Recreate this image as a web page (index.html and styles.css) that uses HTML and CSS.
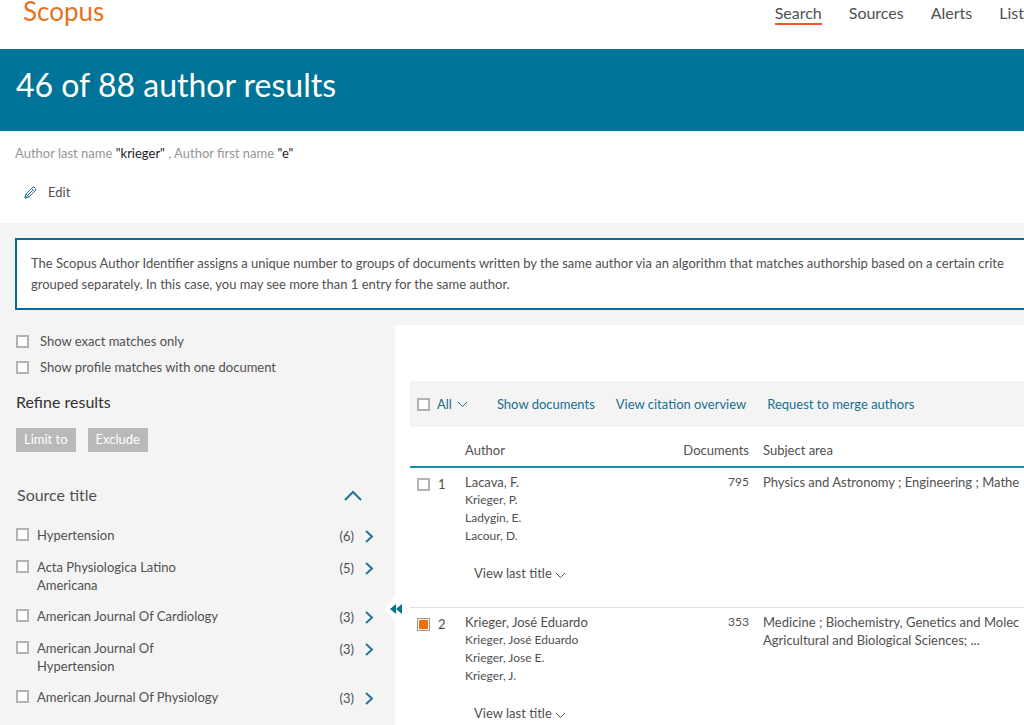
FILE: index.html
```html
<!DOCTYPE html>
<html lang="en">
<head>
<meta charset="utf-8">
<title>Scopus - Author results</title>
<link rel="stylesheet" href="styles.css">
</head>
<body>
<header class="topbar">
  <a class="brand" href="#">Scopus</a>
  <nav class="nav">
    <a class="nav-link active" href="#">Search</a>
    <a class="nav-link" href="#">Sources</a>
    <a class="nav-link" href="#">Alerts</a>
    <a class="nav-link" href="#">List</a>
  </nav>
</header>

<div class="banner"><h1>46 of 88 author results</h1></div>

<section class="query">
  <p class="terms">Author last name <strong>"krieger"</strong> , Author first name <strong>"e"</strong></p>
  <a class="edit" href="#">
    <svg width="13" height="13" viewBox="0 0 13 13" fill="none" stroke="#2a7199" stroke-width="1"><path d="M1 12l1-4 6-6q1-1.500 2.500-.5l1 1q1 1.500-.5 2.500L5 11z"/><path d="M7.500 2.500l3 3M2 8l3 3M3.500 9.500l5-5"/><path d="M1 12l.5-2 1.500 1.500z" fill="#2a7199"/></svg>
    Edit
  </a>
</section>

<main class="content">
  <div class="notice">
    <p>The Scopus Author Identifier assigns a unique number to groups of documents written by the same author via an algorithm that matches authorship based on a certain crite</p>
    <p>grouped separately. In this case, you may see more than 1 entry for the same author.</p>
  </div>

  <div class="columns">
    <aside class="sidebar">
      <label class="option"><input class="box" type="checkbox">Show exact matches only</label>
      <label class="option"><input class="box" type="checkbox">Show profile matches with one document</label>
      <h2>Refine results</h2>
      <div class="actions">
        <button class="btn" type="button">Limit to</button>
        <button class="btn" type="button">Exclude</button>
      </div>
      <div class="facet-head">
        <h3>Source title</h3>
        <button class="icon-btn" type="button" aria-label="Collapse source title"><svg width="18" height="11" viewBox="0 0 18 11" fill="none" stroke="#1f7197" stroke-width="2"><path d="M1 10l8-8 8 8"/></svg></button>
      </div>
      <ul class="facets">
        <li><label class="facet"><input class="box" type="checkbox"><span>Hypertension</span></label><a class="count" href="#">(6)<svg class="chev" width="8" height="13" viewBox="0 0 8 13"><path d="M1 1l6 5.500-6 5.500"/></svg></a></li>
        <li><label class="facet"><input class="box" type="checkbox"><span>Acta Physiologica Latino<br>Americana</span></label><a class="count" href="#">(5)<svg class="chev" width="8" height="13" viewBox="0 0 8 13"><path d="M1 1l6 5.500-6 5.500"/></svg></a></li>
        <li><label class="facet"><input class="box" type="checkbox"><span>American Journal Of Cardiology</span></label><a class="count" href="#">(3)<svg class="chev" width="8" height="13" viewBox="0 0 8 13"><path d="M1 1l6 5.500-6 5.500"/></svg></a></li>
        <li><label class="facet"><input class="box" type="checkbox"><span>American Journal Of<br>Hypertension</span></label><a class="count" href="#">(3)<svg class="chev" width="8" height="13" viewBox="0 0 8 13"><path d="M1 1l6 5.500-6 5.500"/></svg></a></li>
        <li><label class="facet"><input class="box" type="checkbox"><span>American Journal Of Physiology</span></label><a class="count" href="#">(3)<svg class="chev" width="8" height="13" viewBox="0 0 8 13"><path d="M1 1l6 5.500-6 5.500"/></svg></a></li>
      </ul>
    </aside>

    <section class="results">
      <button class="handle" type="button" aria-label="Hide filters"><svg width="24" height="36" viewBox="0 0 24 36"><path d="M12 3Q11 9 4 14q-4 4 0 8 7 5 8 11z" fill="#fff"/><path d="M13 13v10l-6-5zM19 13v10l-6-5z" fill="#0b7390"/></svg></button>
      <div class="toolbar">
        <label class="all"><input class="box" type="checkbox">All <svg class="down" width="11" height="7" viewBox="0 0 11 7"><path d="M1 1l4.500 4.500L10 1"/></svg></label>
        <a href="#">Show documents</a>
        <a href="#">View citation overview</a>
        <a href="#">Request to merge authors</a>
      </div>
      <table class="table">
        <thead>
          <tr><th class="c-pick"></th><th class="c-author">Author</th><th class="c-docs">Documents</th><th class="c-subject">Subject area</th></tr>
        </thead>
        <tbody>
          <tr>
            <td><label class="pick"><input class="box" type="checkbox">1</label></td>
            <td><a class="name" href="#">Lacava, F.</a><ul class="variants"><li>Krieger, P.</li><li>Ladygin, E.</li><li>Lacour, D.</li></ul>
              <button class="last" type="button">View last title <svg class="down" width="11" height="7" viewBox="0 0 11 7"><path d="M1 1l4.500 4.500L10 1"/></svg></button></td>
            <td class="num">795</td>
            <td class="subject">Physics and Astronomy ; Engineering ; Mathe</td>
          </tr>
          <tr>
            <td><label class="pick"><input class="box" type="checkbox" checked>2</label></td>
            <td><a class="name" href="#">Krieger, José Eduardo</a><ul class="variants"><li>Krieger, José Eduardo</li><li>Krieger, Jose E.</li><li>Krieger, J.</li></ul>
              <button class="last" type="button">View last title <svg class="down" width="11" height="7" viewBox="0 0 11 7"><path d="M1 1l4.500 4.500L10 1"/></svg></button></td>
            <td class="num">353</td>
            <td class="subject">Medicine ; Biochemistry, Genetics and Molec<br>Agricultural and Biological Sciences; ...</td>
          </tr>
        </tbody>
      </table>
    </section>
  </div>
</main>
</body>
</html>
```
FILE: styles.css
```css
* { box-sizing: border-box; }
html { overflow: hidden; }
body {
  margin: 0;
  overflow: hidden;
  background: #fff;
  color: #505050;
  font: 13px/18px Lato, "Noto Sans", sans-serif;
}
h1, h2, h3, p, ul { margin: 0; padding: 0; font-weight: 400; }
ul { list-style: none; }
a { color: inherit; text-decoration: none; }
button { font: inherit; color: inherit; border: 0; padding: 0; background: none; }

.topbar {
  display: flex;
  justify-content: space-between;
  height: 49px;
  padding-left: 23px;
  white-space: nowrap;
}
.brand { color: #e9711c; font-size: 26px; line-height: 23px; }
.nav { display: flex; align-items: flex-start; gap: 27px; font-size: 16px; line-height: 25px; }
.nav-link { height: 25px; }
.nav-link.active { border-bottom: 2px solid #ec5b24; }

.banner { padding: 14px 16px 25px; background: #007398; color: #fff; }
.banner h1 { font-size: 32px; line-height: 43px; }

.query { padding: 13px 15px 22px; }
.terms { color: #969696; }
.terms strong { color: #222; font-weight: 400; }
.edit { display: flex; align-items: center; gap: 11px; margin: 21px 0 0 9px; }

.content { padding: 15px 0 0; background: #f4f4f4; }
.notice {
  margin-left: 15px;
  padding: 13px 14px;
  border: 2px solid #046c96;
  border-right: 0;
  background: #fff;
  line-height: 21px;
  white-space: nowrap;
  overflow: hidden;
}
.columns { display: grid; grid-template-columns: 395px minmax(0, 1fr); margin-top: 15px; }

.box {
  appearance: none;
  flex: none;
  width: 13px;
  height: 13px;
  margin: 0;
  border: 2px solid #b3b3b3;
  background: #fff;
}
.box:checked { border: 1px solid #a59585; padding: 1px; background: #ed700d content-box; box-shadow: inset 0 0 0 1px #fff; }

.sidebar { padding: 7px 22px 20px 16px; }
.option { display: flex; align-items: center; gap: 11px; margin-bottom: 8px; }
.sidebar h2 { margin-top: 15px; color: #323232; font-size: 16px; line-height: 22px; }
.actions { display: flex; gap: 12px; margin-top: 15px; }
.btn { height: 24px; padding: 0 8px 2px; background: #b9b9b9; color: #fff; }
.facet-head { display: flex; justify-content: space-between; align-items: center; margin-top: 32px; padding: 0 11px 0 1px; }
.facet-head h3 { font-size: 16px; line-height: 22px; }
.icon-btn svg, .handle svg { display: block; }
.facets { display: flex; flex-direction: column; gap: 13px; margin-top: 20px; }
.facets li { display: flex; justify-content: space-between; align-items: flex-start; }
.facet { display: flex; gap: 8px; }
.facet .box { margin-top: 2px; }
.count { display: flex; align-items: center; gap: 11px; padding-top: 1px; }
.chev { fill: none; stroke: #2874a0; stroke-width: 2; }

.results { position: relative; padding: 56px 0 0 15px; background: #fff; }
.handle { position: absolute; left: -12px; top: 266px; }
.toolbar {
  display: flex;
  align-items: center;
  gap: 21px;
  height: 46px;
  padding-left: 7px;
  background: #f4f4f4;
  color: #16708e;
  white-space: nowrap;
}
.all { display: flex; align-items: center; gap: 5px; margin-right: 8px; }
.all .box { margin-right: 2px; }
.down { fill: none; stroke: currentColor; stroke-width: 1; vertical-align: -1px; }

.table { width: 100%; table-layout: fixed; border-collapse: collapse; }
.table th { padding: 14px 0 7px; border-bottom: 2px solid #178fae; font-weight: 400; text-align: left; }
.table .c-pick { width: 55px; }
.table .c-author { width: 200px; }
.table .c-docs { width: 84px; text-align: right; }
.table .c-subject { padding-left: 14px; }
.table td { padding: 5px 0 25px; border-bottom: 1px solid #e2e2e2; vertical-align: top; }
.table .num { font-size: 12px; text-align: right; }
.table .subject { padding-left: 14px; white-space: nowrap; }
.pick { display: flex; align-items: center; gap: 8px; padding: 2px 0 0 7px; }
.name { display: block; }
.variants { font-size: 12px; }
.last { display: block; margin: 19px 0 0 9px; }
```
